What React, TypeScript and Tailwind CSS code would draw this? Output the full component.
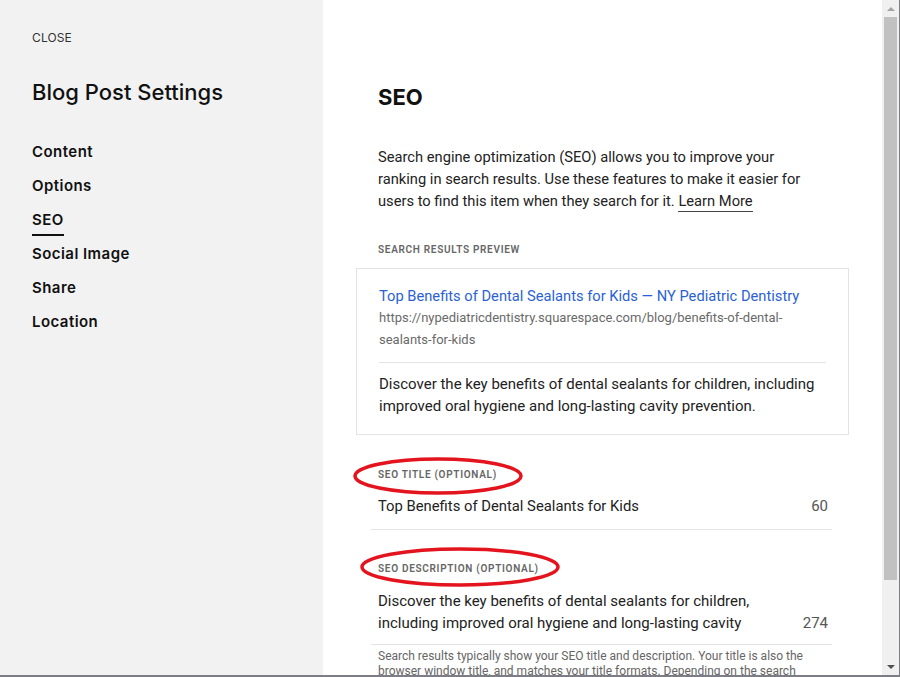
import React from "react";

const navItems = ["Content", "Options", "SEO", "Social Image", "Share", "Location"];

function Sidebar() {
  return (
    <aside className="w-[323px] shrink-0 bg-[#f2f2f2] pl-8 pt-[31px] font-['Inter',sans-serif]">
      <p className="text-[12px] leading-[14px] tracking-[0.01em] text-[#333]">CLOSE</p>
      <h1 className="mt-[33px] text-[22px] font-medium leading-[28px] text-[#111]">Blog Post Settings</h1>
      <nav className="mt-[33px] flex flex-col">
        {navItems.map((item) => (
          <div key={item} className="h-[34px]">
            <span
              className={
                "inline-block text-[15px] font-semibold leading-[20px] tracking-[0.03em] text-[#111] " +
                (item === "SEO" ? "border-b-2 border-[#111] pb-[4px]" : "")
              }
            >
              {item}
            </span>
          </div>
        ))}
      </nav>
    </aside>
  );
}

function FieldLabel({ children }: { children: React.ReactNode }) {
  return (
    <p className="text-[10px] font-semibold uppercase leading-[14px] tracking-[0.07em] text-[#666]">
      {children}
    </p>
  );
}

function Annotation() {
  return (
    <svg className="pointer-events-none absolute left-0 top-0" width="559" height="677">
      <ellipse cx="115" cy="476" rx="83" ry="17" fill="none" stroke="#e3141e" strokeWidth="3.5" />
      <ellipse cx="137" cy="567" rx="98" ry="18" fill="none" stroke="#e3141e" strokeWidth="3.5" />
    </svg>
  );
}

function Main() {
  return (
    <main className="relative flex-1 overflow-hidden bg-white pl-[55px] pr-[50px] pt-[83px]">
      <h2 className="font-['Inter',sans-serif] text-[22px] font-bold leading-[28px] text-[#111]">SEO</h2>
      <p className="mt-[35px] max-w-[440px] text-[14.7px] leading-[22px] text-[#222]">
        Search engine optimization (SEO) allows you to improve your ranking in search results. Use these
        features to make it easier for users to find this item when they search for it.{" "}
        <span className="border-b border-[#444] pb-[1px]">Learn More</span>
      </p>

      <div className="mt-[31px]">
        <FieldLabel>Search Results Preview</FieldLabel>
      </div>

      <div className="-ml-[22px] -mr-[17px] mt-[11px] border border-[#e3e3e3] px-[22px] pb-[17px] pt-[16px]">
        <p className="text-[14.7px] leading-[22px] text-[#2a62d4]">
          Top Benefits of Dental Sealants for Kids — NY Pediatric Dentistry
        </p>
        <p className="text-[13px] leading-[22px] text-[#6a6a6a]">
          https://nypediatricdentistry.squarespace.com/blog/benefits-of-dental-sealants-for-kids
        </p>
        <div className="mt-[11px] h-px bg-[#e3e3e3]" />
        <p className="mt-[10px] text-[15px] leading-[22px] text-[#222]">
          Discover the key benefits of dental sealants for children, including improved oral hygiene and
          long-lasting cavity prevention.
        </p>
      </div>

      <div className="-ml-[7px] mt-[33px] border-b border-[#e3e3e3] pb-[12px] pl-[7px] pr-[4px]">
        <FieldLabel>SEO Title (Optional)</FieldLabel>
        <div className="mt-[13px] flex items-start justify-between">
          <p className="text-[14.8px] leading-[22px] text-[#222]">Top Benefits of Dental Sealants for Kids</p>
          <span className="text-[15px] leading-[22px] text-[#555]">60</span>
        </div>
      </div>

      <div className="-ml-[7px] mt-[32px] border-b border-[#e3e3e3] pb-[10px] pl-[7px] pr-[4px]">
        <FieldLabel>SEO Description (Optional)</FieldLabel>
        <div className="mt-[14px] flex items-end justify-between gap-6">
          <p className="h-[44px] overflow-hidden text-[15px] leading-[22px] text-[#222]">
            Discover the key benefits of dental sealants for children, including improved oral hygiene and
            long-lasting cavity prevention.
          </p>
          <span className="text-[15px] leading-[22px] text-[#555]">274</span>
        </div>
      </div>

      <p className="mt-[4px] text-[12px] leading-[15px] text-[#666]">
        Search results typically show your SEO title and description. Your title is also the browser window
        title, and matches your title formats. Depending on the search engine, the description may be
        shortened.
      </p>

      <Annotation />
    </main>
  );
}

function Scrollbar() {
  return (
    <div className="flex w-[18px] shrink-0 flex-col items-center border-r border-[#7d7d85] bg-[#f0f0f0]">
      <div className="flex h-[17px] w-full items-center justify-center">
        <div className="h-0 w-0 border-x-[4px] border-b-[4px] border-x-transparent border-b-[#a3a3a3]" />
      </div>
      <div className="h-[563px] w-[13px] bg-[#c1c1c1]" />
      <div className="flex-1" />
      <div className="flex h-[17px] w-full items-center justify-center">
        <div className="h-0 w-0 border-x-[4px] border-t-[4px] border-x-transparent border-t-[#505050]" />
      </div>
    </div>
  );
}

export default function App() {
  return (
    <div className="flex h-[677px] w-[900px] flex-col overflow-hidden font-['Roboto',sans-serif]">
      <div className="flex min-h-0 flex-1">
        <Sidebar />
        <Main />
        <Scrollbar />
      </div>
      <div className="h-[2px] bg-[#7d7d85]" />
    </div>
  );
}
